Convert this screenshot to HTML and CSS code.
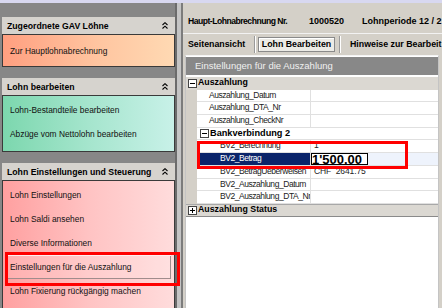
FILE: index.html
```html
<!DOCTYPE html>
<html lang="de">
<head>
    <meta charset="UTF-8">
    <meta name="viewport" content="width=device-width, initial-scale=1.0">
    <title>Einstellungen für die Auszahlung</title>
    <link rel="stylesheet" href="styles.css">
</head>
<body>
    <div class="topbar"></div>
    <div class="window">
        <aside class="sidebar">
            <section class="group">
                <div class="group-head">
                    <span>Zugeordnete GAV Löhne</span>
                    <svg class="chev" width="6" height="7" viewBox="0 0 6 7"><path d="M0.5 3L3 0.7L5.5 3M0.5 6.5L3 4.2L5.5 6.5" fill="none" stroke="#000" stroke-width="1.1"/></svg>
                </div>
                <div class="group-body orange">
                    <div class="item">Zur Hauptlohnabrechnung</div>
                </div>
            </section>

            <section class="group">
                <div class="group-head">
                    <span>Lohn bearbeiten</span>
                    <svg class="chev" width="6" height="7" viewBox="0 0 6 7"><path d="M0.5 3L3 0.7L5.5 3M0.5 6.5L3 4.2L5.5 6.5" fill="none" stroke="#000" stroke-width="1.1"/></svg>
                </div>
                <div class="group-body green">
                    <div class="item">Lohn-Bestandteile bearbeiten</div>
                    <div class="item">Abzüge vom Nettolohn bearbeiten</div>
                </div>
            </section>

            <section class="group group-last">
                <div class="group-head">
                    <span>Lohn Einstellungen und Steuerung</span>
                    <svg class="chev" width="6" height="7" viewBox="0 0 6 7"><path d="M0.5 3L3 0.7L5.5 3M0.5 6.5L3 4.2L5.5 6.5" fill="none" stroke="#000" stroke-width="1.1"/></svg>
                </div>
                <div class="group-body pink">
                    <div class="item">Lohn Einstellungen</div>
                    <div class="item">Lohn Saldi ansehen</div>
                    <div class="item">Diverse Informationen</div>
                    <div class="item active">Einstellungen für die Auszahlung</div>
                    <div class="item">Lohn Fixierung rückgängig machen</div>
                </div>
            </section>
        </aside>

        <div class="splitter"></div>

        <main class="pane">
            <div class="infobar">
                <span class="info-title">Haupt-Lohnabrechnung Nr.</span>
                <span class="info-nr">1000520</span>
                <span class="info-period">Lohnperiode 12 / 2</span>
            </div>

            <nav class="tabs">
                <span class="tab tab-first">Seitenansicht</span>
                <span class="sep"></span>
                <span class="tab tab-active">Lohn Bearbeiten</span>
                <span class="sep"></span>
                <span class="tab tab-last">Hinweise zur Bearbeit</span>
            </nav>

            <div class="frame">
                <div class="frame-title">Einstellungen für die Auszahlung</div>
                <div class="grid">
                    <div class="row cat">
                        <svg class="toggle" width="9" height="9" viewBox="0 0 9 9"><rect x="0.5" y="0.5" width="8" height="8" fill="#fff" stroke="#444"/><path d="M2 4.5H7" stroke="#000"/></svg>
                        <span>Auszahlung</span>
                    </div>
                    <div class="row"><span class="gut"></span><span class="name">Auszahlung_Datum</span><span class="val"></span></div>
                    <div class="row"><span class="gut"></span><span class="name">Auszahlung_DTA_Nr</span><span class="val"></span></div>
                    <div class="row"><span class="gut"></span><span class="name">Auszahlung_CheckNr</span><span class="val"></span></div>
                    <div class="row subcat">
                        <span class="gut"></span>
                        <span class="subcat-label">
                            <svg class="toggle" width="9" height="9" viewBox="0 0 9 9"><rect x="0.5" y="0.5" width="8" height="8" fill="#fff" stroke="#444"/><path d="M2 4.5H7" stroke="#000"/></svg>
                            <span>Bankverbindung 2</span>
                        </span>
                    </div>
                    <div class="row sub"><span class="gut"></span><span class="name">BV2_Berechnung</span><span class="val">1</span></div>
                    <div class="row sub sel">
                        <span class="gut"></span>
                        <span class="name">BV2_Betrag</span>
                        <span class="val"><span class="edit">1'500.00</span></span>
                    </div>
                    <div class="row sub"><span class="gut"></span><span class="name">BV2_BetragUeberweisen</span><span class="val">CHF&nbsp;&nbsp;2641.75</span></div>
                    <div class="row sub"><span class="gut"></span><span class="name">BV2_Auszahlung_Datum</span><span class="val"></span></div>
                    <div class="row sub"><span class="gut"></span><span class="name">BV2_Auszahlung_DTA_Nr</span><span class="val"></span></div>
                    <div class="row cat cat-closed">
                        <svg class="toggle" width="9" height="9" viewBox="0 0 9 9"><rect x="0.5" y="0.5" width="8" height="8" fill="#fff" stroke="#444"/><path d="M2 4.5H7M4.5 2V7" stroke="#000"/></svg>
                        <span>Auszahlung Status</span>
                    </div>
                </div>
            </div>
        </main>
    </div>

    <div class="mark mark-menu"></div>
    <div class="mark mark-field"></div>
</body>
</html>
```

FILE: styles.css
```css
body {
    margin: 0;
    width: 442px;
    height: 308px;
    overflow: hidden;
    position: relative;
    background-color: #878787;
    font-family: "Liberation Sans", Arial, sans-serif;
    color: #000;
}
.topbar {
    height: 3px;
    background-color: #d8d8f0;
}
.window {
    display: flex;
    height: 305px;
}

/* left navigation */
.sidebar {
    width: 173px;
    padding: 14px 0 0 2px;
    display: flex;
    flex-direction: column;
    background-color: #878787;
}
.group {
    margin-bottom: 11px;
    display: flex;
    flex-direction: column;
}
.group-last {
    flex: 1;
    margin-bottom: 0;
}
.group-head {
    height: 17px;
    display: flex;
    align-items: center;
    justify-content: space-between;
    padding: 0 7px 0 5px;
    background-color: #d6d3ce;
    font-weight: bold;
    font-size: 8.7px;
    white-space: nowrap;
}
.group-body {
    border: 1px solid #3a3a3a;
    padding: 2px 0 5px;
}
.group-body.orange {
    padding: 4px 0 3px;
    background: linear-gradient(90deg, #ff9f80, #ffc5a0 55%, #ffd9b3);
}
.group-body.green {
    background: linear-gradient(90deg, #7cd7ae, #a5e5cd 50%, #c8f1e8);
}
.group-body.pink {
    flex: 1;
    border-bottom: none;
    background: linear-gradient(90deg, #ffa0a0, #ffc3c3 50%, #ffdcdc);
}
.item {
    height: 24px;
    line-height: 24px;
    margin: 0 3px;
    padding-left: 4px;
    font-size: 8.4px;
    white-space: nowrap;
    color: #111;
}
.item.active {
    box-shadow: inset 1px 1px #fff0f0, inset -1px -1px #a08c8c;
    background-color: rgba(255, 255, 255, 0.15);
}
.splitter {
    width: 6px;
    background: linear-gradient(90deg, #6b6b6b 0 2px, #c4c4c4 2px);
}

/* right side */
.pane {
    flex: 1;
    min-width: 0;
    display: flex;
    flex-direction: column;
    border-left: 2px solid #7c7c7c;
    background-color: #d4d0c8;
}
.infobar {
    height: 25px;
    padding: 5px 0 0 5px;
    display: flex;
    align-items: center;
    border-bottom: 1px solid #f2f2f2;
    font-weight: bold;
    font-size: 8.6px;
    white-space: nowrap;
    overflow: hidden;
}
.info-title {
    width: 121px;
    flex: none;
    letter-spacing: -0.5px;
}
.info-nr {
    width: 53px;
    flex: none;
    font-size: 9px;
}
.info-period {
    font-size: 9px;
}
.tabs {
    height: 20px;
    display: flex;
    align-items: center;
    padding-left: 5px;
    font-weight: bold;
    font-size: 8.8px;
    white-space: nowrap;
    overflow: hidden;
}
.tab-first {
    width: 66px;
    flex: none;
}
.sep {
    width: 1px;
    height: 17px;
    flex: none;
    border-left: 1px solid #9a9a9a;
    background-color: #fff;
}
.tab-active {
    width: 75px;
    height: 13px;
    line-height: 13px;
    flex: none;
    margin: 0 4px 0 2px;
    text-align: center;
    border: 1px solid #8a8a8a;
    background-color: #ecebe6;
    box-shadow: inset 1px 1px #fff;
}
.tab-last {
    margin-left: 9px;
}
.frame {
    flex: 1;
    margin: 1px 3px 0 2px;
    border: 1px solid #c4c4c4;
    border-top-color: #f4f4f4;
    border-bottom: none;
    background-color: #fff;
    overflow: hidden;
}
.frame-title {
    height: 18px;
    line-height: 18px;
    margin: 1px 0;
    padding-left: 9px;
    background-color: #888;
    color: #f0f0f0;
    font-size: 9.5px;
}

/* property grid */
.grid {
    padding-top: 1px;
}
.row {
    display: flex;
    align-items: stretch;
    height: 12.7px;
    font-size: 8.5px;
    line-height: 11.7px;
    letter-spacing: -0.45px;
    white-space: nowrap;
}
.gut {
    width: 11px;
    flex: none;
    background-color: #d4d0c8;
}
.name {
    width: 114px;
    flex: none;
    box-sizing: border-box;
    padding-left: 12px;
    overflow: hidden;
    border-right: 1px solid #e0e0e0;
    border-bottom: 1px solid #e0e0e0;
    color: #222;
}
.row.sub .name {
    padding-left: 23px;
}
.val {
    flex: 1;
    padding-left: 3px;
    border-bottom: 1px solid #e0e0e0;
    color: #222;
    letter-spacing: -0.1px;
}
.row.cat {
    align-items: center;
    padding-left: 2px;
    background-color: #dbd8d2;
    font-weight: bold;
    font-size: 8.8px;
    letter-spacing: 0;
}
.row.cat .toggle {
    margin-right: 1px;
    flex: none;
}
.row.cat-closed {
    box-sizing: border-box;
    border-top: 1px solid #a8a8a8;
    border-bottom: 1px solid #8a8a8a;
}
.subcat-label {
    flex: 1;
    display: flex;
    align-items: center;
    padding-left: 3px;
    font-weight: bold;
    font-size: 9.2px;
    letter-spacing: 0;
    border-bottom: 1px solid #e0e0e0;
}
.subcat-label .toggle {
    margin-right: 1px;
}
.row.sel .name {
    background-color: #0a246a;
    color: #fff;
}
.row.sel .val {
    padding-left: 0;
    background-color: #eef3fc;
}
.edit {
    display: block;
    width: 57px;
    height: 100%;
    box-sizing: border-box;
    border: 1px solid #000;
    background-color: #fff;
    font-weight: bold;
    font-size: 13px;
    line-height: 11px;
    letter-spacing: 0;
    color: #000;
}

/* red annotation boxes */
.mark {
    position: absolute;
    box-sizing: border-box;
    border: 3px solid #f00;
}
.mark-menu {
    left: 5px;
    top: 252px;
    width: 175px;
    height: 34px;
}
.mark-field {
    left: 197px;
    top: 141px;
    width: 211px;
    height: 28px;
}
```
